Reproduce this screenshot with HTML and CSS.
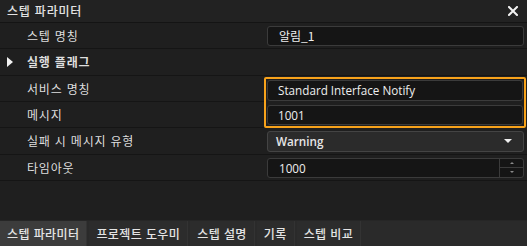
FILE: index.html
```html
<!DOCTYPE html>
<html lang="ko">
<head>
<meta charset="utf-8">
<link rel="stylesheet" href="styles.css">
</head>
<body>
<div class="panel">
  <div class="titlebar">
    <span class="title">스텝 파라미터</span>
    <svg class="close" width="10" height="10" viewBox="0 0 10 10"><path d="M1 1L9 9M9 1L1 9" stroke="#f2f2f2" stroke-width="2" stroke-linecap="square"/></svg>
  </div>
  <div class="grid">
    <div class="label r1">스텝 명칭</div>
    <div class="value r1"><div class="input">알림_1</div></div>

    <div class="label group r2"><span class="tri"></span>실행 플래그</div>
    <div class="value r2"></div>

    <div class="label r3">서비스 명칭</div>
    <div class="label r4">메시지</div>
    <div class="focus">
      <div class="input latin">Standard Interface Notify</div>
      <div class="input latin">1001</div>
    </div>

    <div class="label r5">실패 시 메시지 유형</div>
    <div class="value r5"><div class="select"><span>Warning</span><span class="caret"></span></div></div>

    <div class="label r6">타임아웃</div>
    <div class="value r6"><div class="spin"><span class="num">1000</span><span class="arrows"><span class="up"></span><span class="down"></span></span></div></div>
  </div>
  <div class="spacer"></div>
  <div class="tabs">
    <div class="tab active">스텝 파라미터</div>
    <div class="tab">프로젝트 도우미</div>
    <div class="tab">스텝 설명</div>
    <div class="tab">기록</div>
    <div class="tab">스텝 비교</div>
  </div>
</div>
</body>
</html>
```

FILE: styles.css
```css
* { box-sizing: border-box; }
html, body { margin: 0; padding: 0; }
body {
  background: #1f1f1f;
  color: #e2e2e2;
  font-family: "Noto Sans CJK KR", "Noto Sans", sans-serif;
  font-size: 12px;
  letter-spacing: 0.8px;
  width: 527px;
  height: 246px;
  overflow: hidden;
}
.panel {
  display: flex;
  flex-direction: column;
  height: 246px;
}
.titlebar {
  height: 23px;
  display: flex;
  align-items: center;
  justify-content: space-between;
  padding: 0 9px 0 7px;
  border-bottom: 1px solid #141414;
  background: #222222;
}
.title { font-weight: 500; line-height: 1; }
.close { display: block; }
.grid {
  display: grid;
  grid-template-columns: 264px 1fr;
  grid-template-rows: 26px 27px 26px 26px 27px 26px;
}
.label {
  display: flex;
  align-items: center;
  padding-left: 27px;
  border-bottom: 1px solid #151515;
  color: #dedede;
  line-height: 1;
}
.value {
  display: flex;
  align-items: center;
  padding: 0 3px;
  border-bottom: 1px solid #151515;
}
.r1 { grid-row: 1; }
.r2 { grid-row: 2; }
.r3 { grid-row: 3; }
.r4 { grid-row: 4; }
.r5 { grid-row: 5; }
.r6 { grid-row: 6; }
.label.group { padding-left: 7px; font-weight: 700; }
.tri {
  width: 0; height: 0;
  border-top: 5px solid transparent;
  border-bottom: 5px solid transparent;
  border-left: 6px solid #f2f2f2;
  margin-right: 14px;
}
.focus {
  grid-column: 2;
  grid-row: 3 / 5;
  border: 2px solid #f7a21b;
  border-radius: 2px;
  margin: 1px 1px 0 0;
  display: flex;
  flex-direction: column;
  justify-content: space-between;
  padding: 1px;
  gap: 4px;
}
.input {
  flex: 1;
  height: 20px;
  background: #151515;
  border: 1px solid #3b3b3b;
  border-radius: 3px;
  display: flex;
  align-items: center;
  padding-left: 11px;
  color: #eeeeee;
  width: 100%;
  letter-spacing: 0;
}
.latin {
  font-family: "Open Sans", "Noto Sans CJK KR", sans-serif;
  font-size: 11.7px;
}
.focus .input { height: auto; padding-left: 10px; }
.select {
  width: 100%;
  height: 21px;
  background: #2b2b2b;
  border: 1px solid #444444;
  border-radius: 3px;
  display: flex;
  align-items: center;
  justify-content: space-between;
  padding: 0 11px 0 8px;
  font-family: "Open Sans", sans-serif;
  font-size: 11.7px;
  letter-spacing: 0;
  font-weight: 600;
  color: #e6e6e6;
}
.caret {
  width: 0; height: 0;
  border-left: 4px solid transparent;
  border-right: 4px solid transparent;
  border-top: 4px solid #f0f0f0;
}
.spin {
  width: 100%;
  height: 20px;
  background: #151515;
  border: 1px solid #3b3b3b;
  border-radius: 3px;
  display: flex;
  align-items: stretch;
  font-family: "Open Sans", sans-serif;
  font-size: 11.7px;
  letter-spacing: 0;
}
.num { flex: 1; display: flex; align-items: center; padding-left: 11px; color: #eeeeee; }
.arrows {
  width: 24px;
  border-left: 1px solid #3b3b3b;
  display: flex;
  flex-direction: column;
}
.arrows span { flex: 1; display: flex; align-items: center; justify-content: center; }
.arrows .up { border-bottom: 1px solid #3b3b3b; }
.arrows .up::after {
  content: ""; border-left: 2px solid transparent; border-right: 2px solid transparent; border-bottom: 2px solid #8a8a8a;
}
.arrows .down::after {
  content: ""; border-left: 2px solid transparent; border-right: 2px solid transparent; border-top: 2px solid #8a8a8a;
}
.spacer { flex: 1; }
.tabs {
  height: 26px;
  display: flex;
  background: #2a2a2a;
  border-top: 1px solid #262626;
  gap: 2px;
}
.tab {
  display: flex;
  align-items: center;
  padding: 0 7px;
  background: #2c2c2c;
  border-right: 1px solid #333333;
  color: #e4e4e4;
  font-weight: 500;
  line-height: 1;
  letter-spacing: 0.4px;
}
.tab.active { background: #3c3c3c; }
```
